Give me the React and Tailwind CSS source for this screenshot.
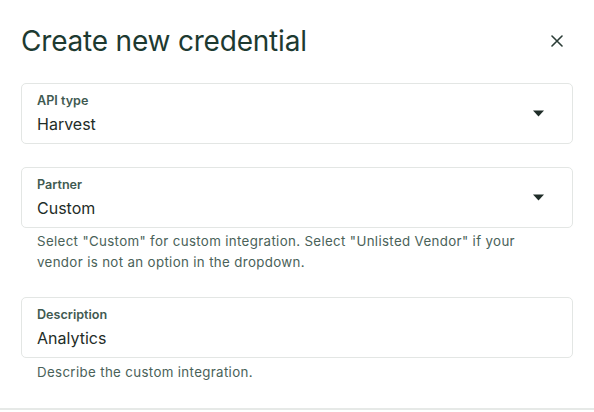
import React from "react";

function Caret() {
  return (
    <svg width="11" height="7" viewBox="0 0 11 7" className="shrink-0">
      <path d="M0 0.5 H11 L5.5 6.5 Z" fill="#1f2d28" />
    </svg>
  );
}

function Field({ label, value, select }) {
  return (
    <div className="flex h-[61px] items-center rounded-[5px] border border-[#e3e6e4] bg-white pl-[15px] pr-[28px]">
      <div className="flex flex-1 flex-col">
        <span className="text-[12.6px] font-semibold leading-[16px] text-[#3f5a51]">{label}</span>
        <span className="mt-[5px] text-[16px] leading-[20px] text-[#1f2d28]">{value}</span>
      </div>
      {select && <Caret />}
    </div>
  );
}

export default function App() {
  return (
    <div className="h-[412px] w-[594px] overflow-hidden bg-white" style={{ fontFamily: "Inter, 'Noto Sans', sans-serif" }}>
      <div className="flex h-[410px] flex-col border-b-2 border-[#e6e9e7] px-[21px]">
        <div className="flex items-center justify-between pt-[24px]">
          <h1 className="text-[28px] font-normal leading-[34px] tracking-[-0.2px] text-[#1d3a31]">Create new credential</h1>
          <svg width="12" height="12" viewBox="0 0 12 12" className="mr-[10px]">
            <path d="M1 1 L11 11 M11 1 L1 11" stroke="#2b3d37" strokeWidth="1.6" strokeLinecap="round" />
          </svg>
        </div>
        <div className="mt-[25px]">
          <Field label="API type" value="Harvest" select />
        </div>
        <div className="mt-[23px]">
          <Field label="Partner" value="Custom" select />
          <p className="mt-[3px] px-[16px] text-[13.3px] leading-[21px] tracking-[0.35px] text-[#4a6259]">
            Select "Custom" for custom integration. Select "Unlisted Vendor" if your vendor is not an option in the dropdown.
          </p>
        </div>
        <div className="mt-[24px]">
          <Field label="Description" value="Analytics" />
          <p className="mt-[4px] px-[16px] text-[13.3px] leading-[21px] tracking-[0.35px] text-[#4a6259]">
            Describe the custom integration.
          </p>
        </div>
      </div>
    </div>
  );
}
